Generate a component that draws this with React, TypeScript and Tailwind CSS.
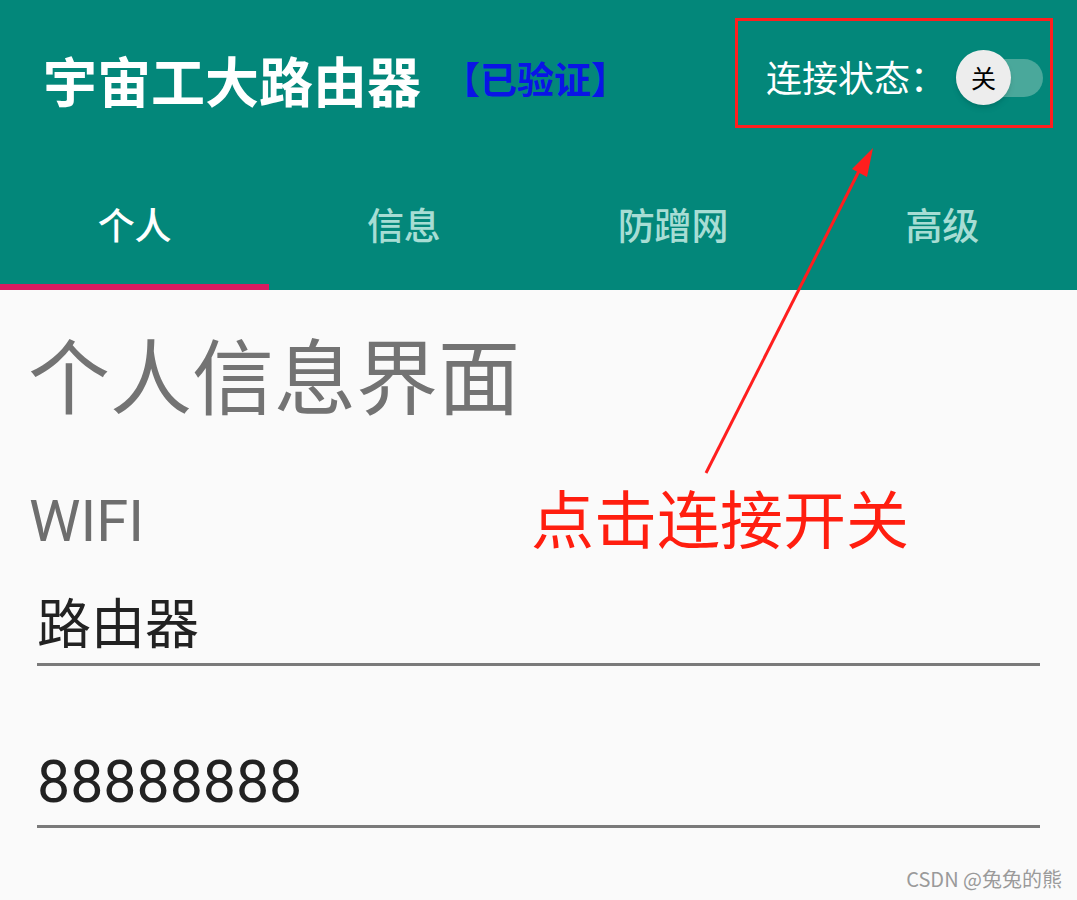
import React, { useState } from "react";

const font = { fontFamily: '"Noto Sans CJK SC", "Noto Sans", sans-serif' };
const latin = { fontFamily: '"Roboto", "Noto Sans", sans-serif' };

const tabs = ["个人", "信息", "防蹭网", "高级"];

const App: React.FC = () => {
  const [active, setActive] = useState(0);
  const [connected, setConnected] = useState(false);

  return (
    <div
      className="relative h-[900px] w-[1077px] overflow-hidden bg-[#fafafa]"
      style={font}
    >
      {/* Header */}
      <header className="bg-[#03877a]">
        <div className="flex h-[146px] items-center justify-between pl-[43px] pr-[24px]">
          <div className="flex items-center">
            <span className="mt-[14px] text-[54px] font-bold leading-none text-white">
              宇宙工大路由器
            </span>
            <span className="mt-[10px] ml-[22px] text-[37px] font-bold leading-none text-[#0a14e6]">
              【已验证】
            </span>
          </div>

          {/* Connection box */}
          <div className="flex h-[110px] w-[318px] items-center border-[3px] border-[#ff1e1e] pl-[28px]">
            <span className="mt-[6px] text-[36px] leading-none text-white">连接状态：</span>
            <button
              className="relative ml-[10px] mt-[10px] h-[38px] w-[87px] rounded-full bg-[#4aa89b]"
              onClick={() => setConnected(!connected)}
            >
              <span className="absolute left-0 top-[-9px] flex h-[55px] w-[55px] items-center justify-center rounded-full bg-[#ededed] text-[25px] text-black shadow-md">
                {connected ? "开" : "关"}
              </span>
            </button>
          </div>
        </div>

        {/* Tabs */}
        <nav className="flex h-[144px]">
          {tabs.map((tab, i) => (
            <button
              key={tab}
              onClick={() => setActive(i)}
              className={
                "flex flex-1 items-center justify-center border-b-[6px] pt-[18px] text-[37px] font-medium leading-none " +
                (i === active
                  ? "border-[#d81b60] text-white"
                  : "border-transparent text-[#a7ddd4]")
              }
            >
              {tab}
            </button>
          ))}
        </nav>
      </header>

      {/* Content */}
      <main className="px-[37px]">
        <h1 className="ml-[-9px] mt-[42px] text-[82px] leading-none text-[#737373]">
          个人信息界面
        </h1>
        <div
          className="ml-[-8px] mt-[78px] text-[58px] leading-none text-[#6e6e6e]"
          style={latin}
        >
          WIFI
        </div>

        <div className="mt-[44px] border-b-[3px] border-[#7a7a7a] pb-[14px]">
          <span className="text-[54px] leading-none text-[#222]">路由器</span>
        </div>

        <div className="mt-[86px] border-b-[3px] border-[#7a7a7a] pb-[14px]">
          <span className="text-[59px] leading-none text-[#222]" style={latin}>
            88888888
          </span>
        </div>
      </main>

      {/* Annotation arrow */}
      <svg
        className="pointer-events-none absolute left-0 top-0"
        width="1077"
        height="900"
      >
        <line x1="706" y1="473" x2="862" y2="165" stroke="#ff1e1e" strokeWidth="3" />
        <polygon points="873,148 852,169 867,177" fill="#ff1e1e" />
      </svg>

      <div className="absolute left-[531px] top-[484px] text-[63px] leading-none text-[#ff1e0f]">
        点击连接开关
      </div>

      <div className="absolute right-[15px] bottom-[6px] text-[20px] text-[#9a9a9a]">
        CSDN @兔兔的熊
      </div>
    </div>
  );
};

export default App;
